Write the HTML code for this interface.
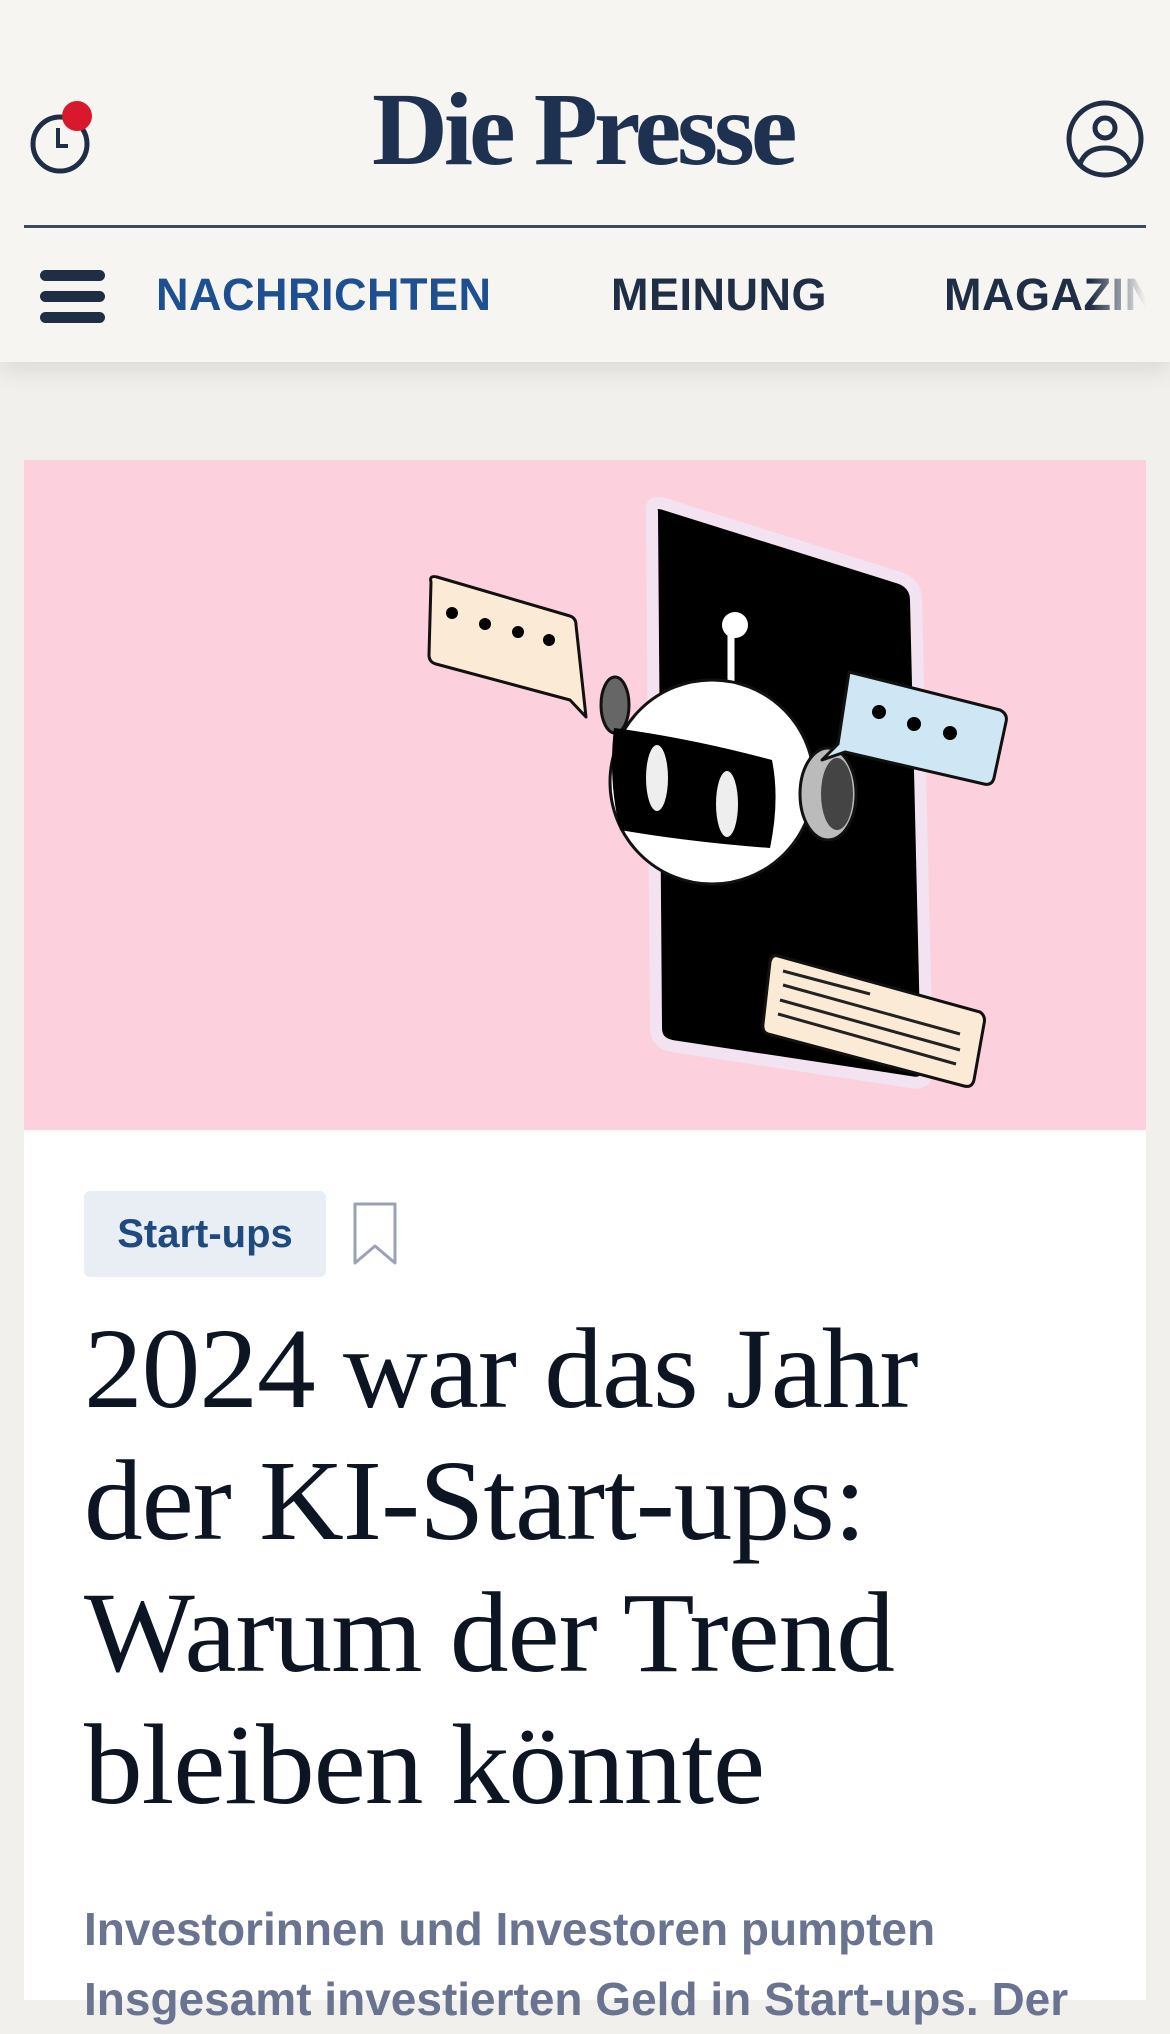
<!DOCTYPE html>
<html><head><meta charset="utf-8"><style>
*{margin:0;padding:0;box-sizing:border-box}
body{width:1170px;height:1992px;overflow:hidden;background:#f1f0ed;font-family:"Liberation Sans",sans-serif;position:relative}
.hdr{position:absolute;left:0;top:0;width:1170px;height:362px;background:#f6f5f2;box-shadow:0 8px 24px rgba(0,0,0,.10)}
.logo{position:absolute;left:372px;top:70px;font-family:"Liberation Serif",serif;font-weight:bold;font-size:104px;color:#1f3150;letter-spacing:-4px;transform:scaleX(1.01);transform-origin:left top;white-space:nowrap}
.rule{position:absolute;left:24px;top:225px;width:1122px;height:3px;background:#3d4a5e}
.nav{position:absolute;top:269px;font-weight:bold;font-size:45px;letter-spacing:0.5px;color:#1f2d45;white-space:nowrap}
.ham{position:absolute;left:40px;width:65px;height:11px;border-radius:6px;background:#1f2d45}
.card{position:absolute;left:24px;top:460px;width:1122px;height:1540px;background:#fff}
.img{position:absolute;left:0;top:0;width:1122px;height:670px;background:#fcd1dd}
.tag{position:absolute;left:60px;top:731px;width:242px;height:86px;background:#e9eef5;border-radius:6px;color:#1e4a7e;font-weight:bold;font-size:40px;line-height:86px;text-align:center}
.h1{position:absolute;left:60px;top:843px;white-space:nowrap;font-family:"Liberation Serif",serif;font-size:114px;line-height:132px;color:#0d1522;letter-spacing:-1px;transform:scaleX(1.03);transform-origin:left top}
.sub{position:absolute;left:60px;top:1434px;font-size:46px;line-height:70px;color:#6a7390;font-weight:bold;white-space:nowrap}
</style></head><body>
<div class="hdr">
<svg style="position:absolute;left:0;top:90px" width="110" height="100" viewBox="0 0 110 100">
<circle cx="60" cy="54" r="27" fill="none" stroke="#1f2d45" stroke-width="5"/>
<path d="M58 38 V56 H68" fill="none" stroke="#1f2d45" stroke-width="4"/>
<circle cx="77" cy="26" r="15" fill="#d9182b"/></svg>
<div class="logo">Die Presse</div>
<svg style="position:absolute;left:1064px;top:98px" width="82" height="82" viewBox="0 0 82 82">
<circle cx="41" cy="41" r="36" fill="none" stroke="#1f2d45" stroke-width="5"/>
<circle cx="41" cy="30" r="10" fill="none" stroke="#1f2d45" stroke-width="5"/>
<path d="M16 66 Q22 50 41 50 Q60 50 66 66" fill="none" stroke="#1f2d45" stroke-width="5"/></svg>
<div class="rule"></div>
<div class="ham" style="top:270px"></div><div class="ham" style="top:291px"></div><div class="ham" style="top:312px"></div>
<div class="nav" style="left:156px;color:#1e4f8e">NACHRICHTEN</div>
<div class="nav" style="left:611px">MEINUNG</div>
<div class="nav" style="left:944px">MAGAZIN</div>
<div style="position:absolute;left:1090px;top:260px;width:80px;height:70px;background:linear-gradient(to right,rgba(246,245,242,0),#f6f5f2 70%)"></div>
</div>
<div class="card">
<div class="img">
<svg width="1122" height="670" viewBox="24 460 1122 670">
<path d="M652 512 Q650 500 664 504 L900 578 Q916 584 916 600 L927 1068 Q928 1086 910 1082 L672 1046 Q656 1043 656 1028 Z" fill="#000" stroke="#f3e3f0" stroke-width="12" stroke-linejoin="round"/>
<path d="M431 582 Q429 575 437 577 L570 616 Q576 618 576 625 L586 717 L570 700 L436 664 Q429 662 429 655 Z" fill="#fbead6" stroke="#111" stroke-width="3" stroke-linejoin="round"/>
<circle cx="452" cy="613" r="6"/><circle cx="485" cy="624" r="6"/><circle cx="518" cy="632" r="6"/><circle cx="549" cy="640" r="6"/>
<ellipse cx="615" cy="705" rx="14" ry="28" fill="#666" stroke="#111" stroke-width="3"/>
<line x1="731" y1="630" x2="731" y2="682" stroke="#fff" stroke-width="7"/>
<circle cx="735" cy="625" r="13" fill="#fff"/>
<circle cx="712" cy="782" r="102" fill="#fff" stroke="#111" stroke-width="3"/>
<path d="M614 728 Q690 738 772 760 Q780 800 770 848 Q690 842 620 830 Q608 780 614 728 Z" fill="#000"/>
<ellipse cx="657" cy="778" rx="11" ry="33" fill="#eee"/>
<ellipse cx="727" cy="804" rx="11" ry="33" fill="#eee"/>
<ellipse cx="828" cy="794" rx="28" ry="46" fill="#bbb" stroke="#111" stroke-width="3"/>
<ellipse cx="837" cy="794" rx="16" ry="36" fill="#444"/>
<path d="M849 672 L1000 710 Q1008 714 1006 722 L994 778 Q992 786 984 784 L845 752 L822 760 L838 744 Z" fill="#cfe7f4" stroke="#111" stroke-width="3" stroke-linejoin="round"/>
<circle cx="879" cy="712" r="7"/><circle cx="914" cy="724" r="7"/><circle cx="950" cy="733" r="7"/>
<path d="M778 956 L980 1012 Q986 1016 984 1024 L974 1080 Q972 1088 964 1086 L768 1034 Q762 1032 763 1024 L770 962 Q772 954 778 956 Z" fill="#fbead6" stroke="#111" stroke-width="3"/>
<path d="M783 971 L870 994 M783 985 L960 1034 M780 1000 L960 1050 M778 1014 L956 1064" stroke="#222" stroke-width="3"/>
</svg>
</div>
<div class="tag">Start-ups</div>
<svg style="position:absolute;left:327px;top:740px" width="50" height="70" viewBox="0 0 50 70"><path d="M4 4 H44 V63 L24 46 L4 63 Z" fill="none" stroke="#9aa3b3" stroke-width="3" stroke-linejoin="round"/></svg>
<div class="h1">2024 war das Jahr<br>der KI-Start-ups:<br>Warum der Trend<br>bleiben könnte</div>
<div class="sub">Investorinnen und Investoren pumpten<br>Insgesamt investierten Geld in Start-ups. Der</div>
</div>
</body></html>
